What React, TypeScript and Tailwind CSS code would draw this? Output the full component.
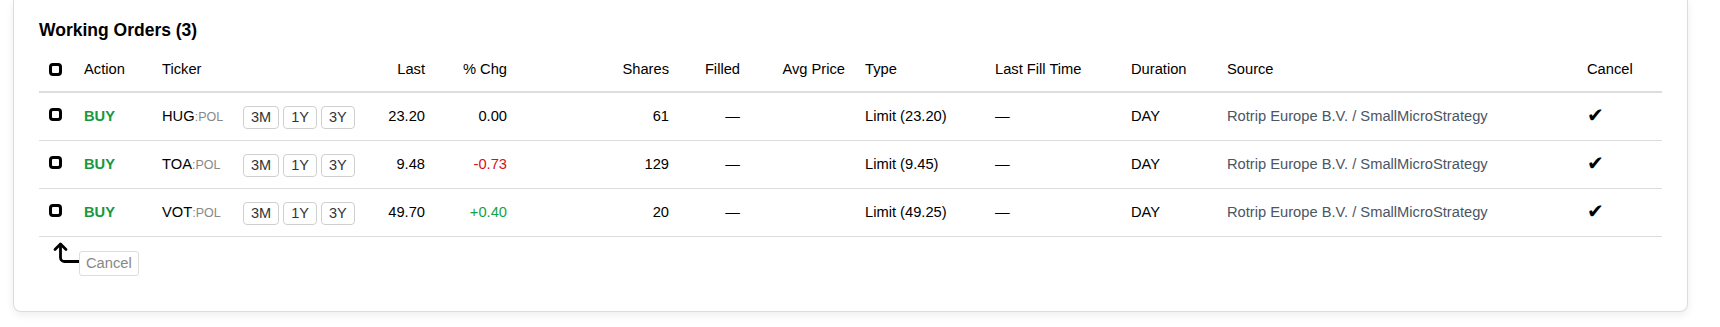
import React from 'react';

type Order = {
  id: string;
  ticker: string;
  exchange: string;
  last: string;
  chg: string;
  shares: number;
  limit: string;
};

const ORDERS: Order[] = [
  { id: 'o1', ticker: 'HUG', exchange: 'POL', last: '23.20', chg: '0.00', shares: 61, limit: '23.20' },
  { id: 'o2', ticker: 'TOA', exchange: 'POL', last: '9.48', chg: '-0.73', shares: 129, limit: '9.45' },
  { id: 'o3', ticker: 'VOT', exchange: 'POL', last: '49.70', chg: '+0.40', shares: 20, limit: '49.25' },
];

const SOURCE = 'Rotrip Europe B.V. / SmallMicroStrategy';

const Box = () => (
  <span className="block w-[13px] h-[13px] border-[3px] border-black rounded-[4px]"></span>
);

const RangeButton = ({ label }: { label: string }) => (
  <button className="shrink-0 h-[23px] px-[7px] border border-[#cfcfcf] rounded-[4px] bg-white text-[14.5px] leading-[21px] text-[#333]">
    {label}
  </button>
);

const chgColor = (chg: string) => {
  if (chg.startsWith('-')) return 'text-[#d4111e]';
  if (chg.startsWith('+')) return 'text-[#13a24b]';
  return 'text-black';
};

const App: React.FC = () => {
  return (
    <div className="min-h-[327px] bg-white pl-[13px] font-['Liberation_Sans',Arial,sans-serif] text-[14.7px] text-black">
      <div className="w-[1675px] bg-white border-x border-b border-[#dcdcdc] rounded-b-lg shadow-[0_3px_8px_rgba(0,0,0,0.07)] px-[25px] pt-[20px] pb-[35px]">
        <h2 className="text-[17.5px] leading-[20px] font-bold mb-[8px]">Working Orders (3)</h2>

        <table className="w-[1623px] table-fixed border-collapse">
          <colgroup>
            <col className="w-[35px]" />
            <col className="w-[78px]" />
            <col className="w-[216px]" />
            <col className="w-[67px]" />
            <col className="w-[82px]" />
            <col className="w-[162px]" />
            <col className="w-[71px]" />
            <col className="w-[105px]" />
            <col className="w-[130px]" />
            <col className="w-[136px]" />
            <col className="w-[96px]" />
            <col className="w-[360px]" />
            <col className="w-[85px]" />
          </colgroup>
          <thead>
            <tr className="h-[44px] border-b-2 border-[#dddddd]">
              <th className="pl-[10px] font-normal text-left"><Box /></th>
              <th className="px-[10px] font-normal text-left">Action</th>
              <th className="px-[10px] font-normal text-left">Ticker</th>
              <th className="px-[10px] font-normal text-right">Last</th>
              <th className="px-[10px] font-normal text-right">% Chg</th>
              <th className="px-[10px] font-normal text-right">Shares</th>
              <th className="px-[10px] font-normal text-right">Filled</th>
              <th className="px-[10px] font-normal text-right">Avg Price</th>
              <th className="px-[10px] font-normal text-left">Type</th>
              <th className="px-[10px] font-normal text-left">Last Fill Time</th>
              <th className="px-[10px] font-normal text-left">Duration</th>
              <th className="px-[10px] font-normal text-left">Source</th>
              <th className="px-[10px] font-normal text-left">Cancel</th>
            </tr>
          </thead>
          <tbody>
            {ORDERS.map((o) => (
              <tr key={o.id} className="h-[48px] border-b border-[#dddddd]">
                <td className="pl-[10px] pb-[3px]"><Box /></td>
                <td className="px-[10px] font-bold text-[#16993d]">BUY</td>
                <td className="pl-[10px]">
                  <div className="flex items-center">
                    <span className="w-[81px] shrink-0">
                      {o.ticker}
                      <span className="text-[12.5px] text-[#888]">:{o.exchange}</span>
                    </span>
                    <div className="flex gap-[4px] mt-[3px]">
                      <RangeButton label="3M" />
                      <RangeButton label="1Y" />
                      <RangeButton label="3Y" />
                    </div>
                  </div>
                </td>
                <td className="px-[10px] text-right">{o.last}</td>
                <td className={`px-[10px] text-right ${chgColor(o.chg)}`}>{o.chg}</td>
                <td className="px-[10px] text-right">{o.shares}</td>
                <td className="px-[10px] text-right">—</td>
                <td className="px-[10px] text-right"></td>
                <td className="px-[10px]">Limit ({o.limit})</td>
                <td className="px-[10px]">—</td>
                <td className="px-[10px]">DAY</td>
                <td className="px-[10px] text-[#4b5563] whitespace-nowrap">{SOURCE}</td>
                <td className="px-[10px] pb-[2px] text-[20px] leading-none font-['DejaVu_Sans',sans-serif]">✔</td>
              </tr>
            ))}
          </tbody>
        </table>

        <div className="flex items-start pl-[11px] pt-[3px]">
          <svg width="29" height="24" viewBox="0 0 29 24" fill="none" stroke="black" strokeWidth="2.8" strokeLinecap="round" strokeLinejoin="round">
            <polyline points="5 9.5 10.5 4 16 9.5" />
            <path d="M29 21.5H14.5a4 4 0 0 1-4-4V4.5" />
          </svg>
          <button className="mt-[11px] h-[25px] px-[6px] border border-[#dddddd] rounded-[3px] bg-white text-[#888] leading-[23px]">
            Cancel
          </button>
        </div>
      </div>
    </div>
  );
};

export default App;
